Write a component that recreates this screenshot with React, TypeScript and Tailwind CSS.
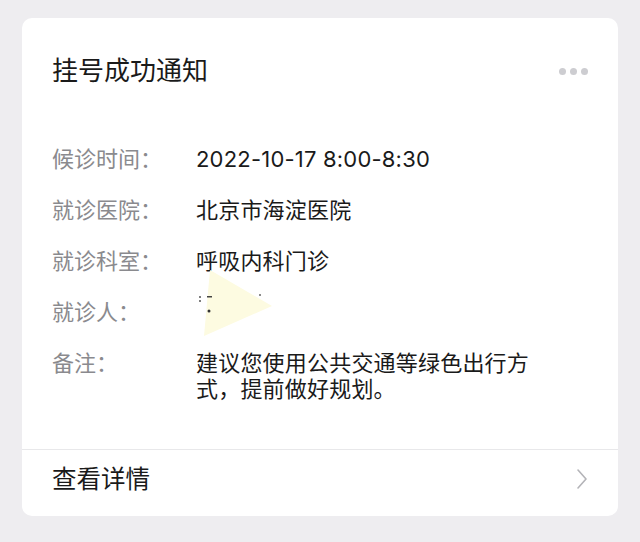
import type { ReactNode } from 'react';

const rows: { label: string; value: ReactNode }[] = [
  { label: '候诊时间：', value: '2022-10-17 8:00-8:30' },
  { label: '就诊医院：', value: '北京市海淀医院' },
  { label: '就诊科室：', value: '呼吸内科门诊' },
  {
    label: '就诊人：',
    value: (
      <span className="relative block h-[26px]">
        {/* redacted name, covered by a pale marker */}
        <svg className="absolute left-0 top-[-29px]" width="90" height="70" viewBox="0 0 90 70">
          <polygon points="14,0 76,36 8,66" fill="#fdfbe1" />
          <circle cx="4" cy="27" r="1" fill="#555" />
          <circle cx="4" cy="31" r="1" fill="#555" />
          <rect x="11" y="26" width="5" height="1.5" fill="#444" />
          <circle cx="13" cy="41" r="1.5" fill="#333" />
          <circle cx="64" cy="25" r="1" fill="#666" />
        </svg>
      </span>
    ),
  },
  { label: '备注：', value: '建议您使用公共交通等绿色出行方式，提前做好规划。' },
];

export default function App() {
  return (
    <div
      className="min-h-[542px] w-[640px] bg-[#eeedf0] px-[22px] pt-[18px]"
      style={{ fontFamily: 'Inter, "Noto Sans CJK SC", sans-serif' }}
    >
      <div className="overflow-hidden rounded-[10px] bg-white">
        <div className="flex items-center justify-between pl-[30px] pr-[30px] pt-[37px]">
          <h1 className="text-[26px] leading-[32px] text-[#1a1a1a]">挂号成功通知</h1>
          <div className="flex gap-[4px]">
            <span className="h-[7px] w-[7px] rounded-full bg-[#cdcdd1]" />
            <span className="h-[7px] w-[7px] rounded-full bg-[#cdcdd1]" />
            <span className="h-[7px] w-[7px] rounded-full bg-[#cdcdd1]" />
          </div>
        </div>

        <div className="mt-[59px] flex flex-col gap-[25px] px-[30px] pb-[47px] text-[22px] leading-[26px]">
          {rows.map((r) => (
            <div key={r.label} className="flex">
              <span className="w-[144px] shrink-0 text-[#8a8a8e]">{r.label}</span>
              <span className="w-[345px] tracking-[0.2px] text-[#1a1a1a]">{r.value}</span>
            </div>
          ))}
        </div>

        <div className="flex items-center justify-between border-t border-[#e8e8ea] pl-[30px] pr-[30px] pt-[16px] pb-[24px]">
          <span className="text-[24.5px] leading-[26px] text-[#1a1a1a]">查看详情</span>
          <svg width="12" height="22" viewBox="0 0 12 22" fill="none">
            <path d="M2 2l8 9-8 9" stroke="#b4b4b8" strokeWidth="1.6" strokeLinecap="round" strokeLinejoin="round" />
          </svg>
        </div>
      </div>
    </div>
  );
}
